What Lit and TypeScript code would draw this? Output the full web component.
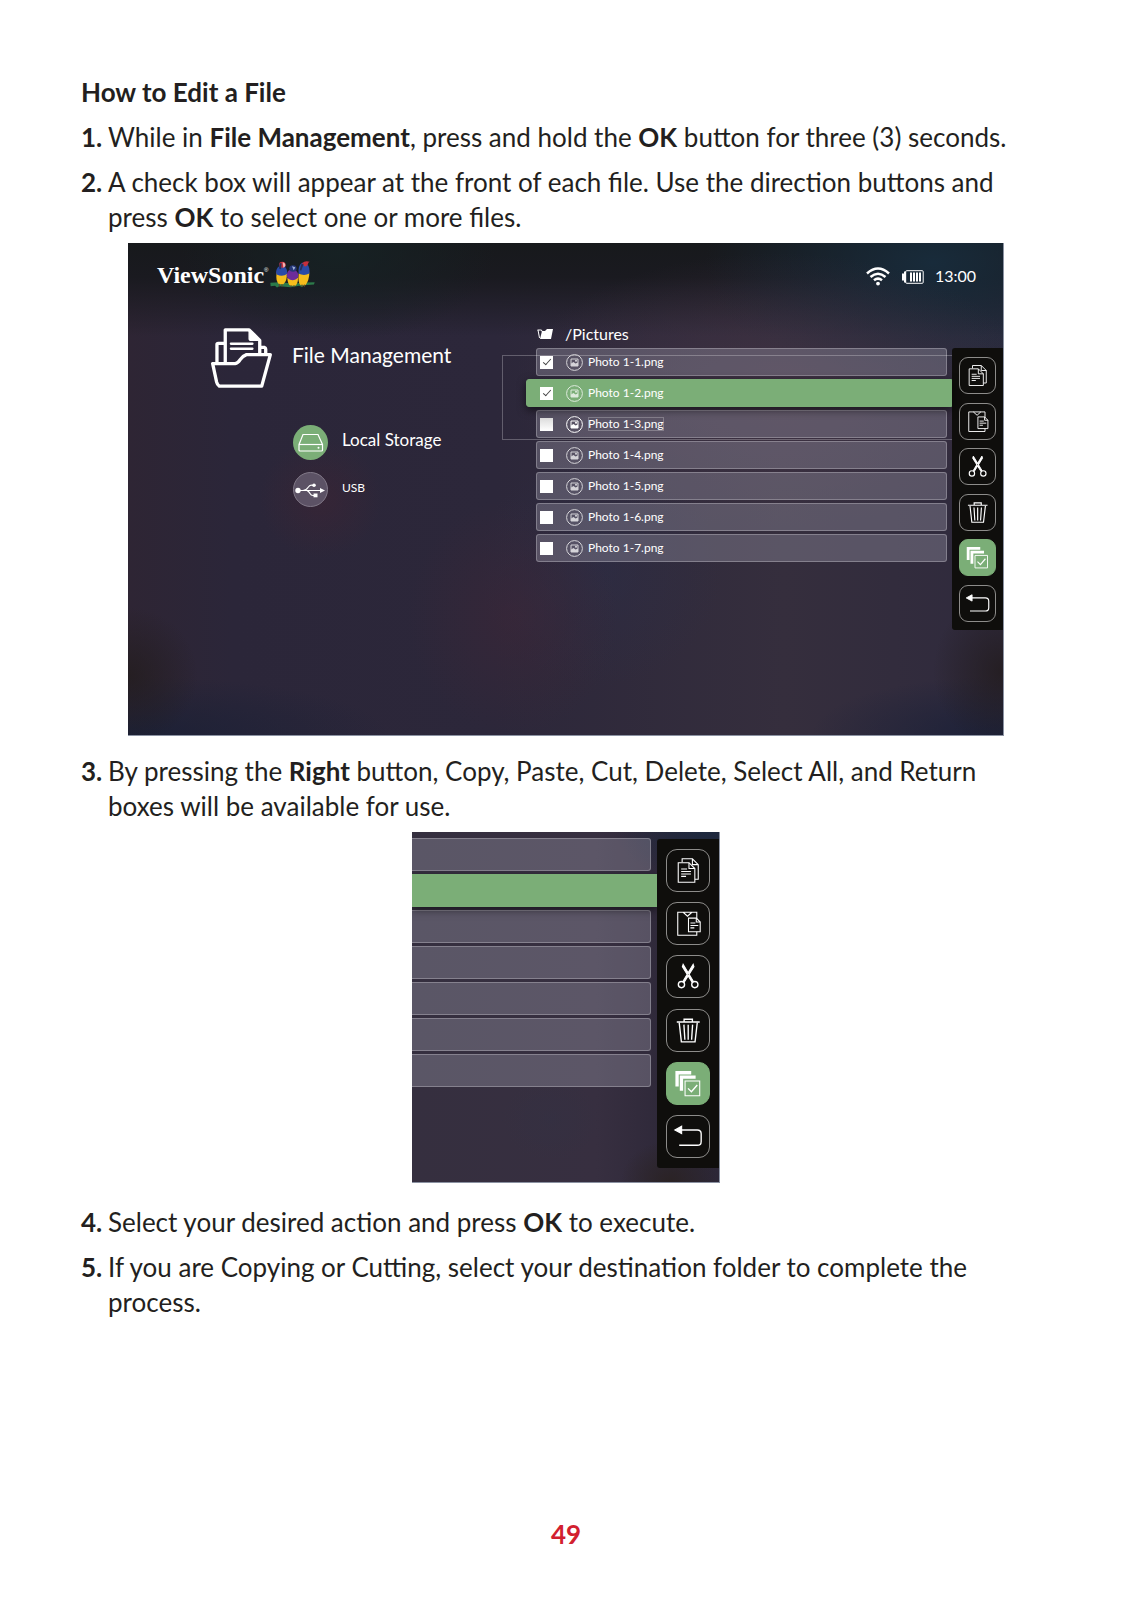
import { LitElement, html, css, svg } from "lit";
import { customElement, property } from "lit/decorators.js";
import { classMap } from "lit/directives/class-map.js";

const actions = [
  {
    name: "Copy",
    active: false,
    art: svg`<path d="M16 13.5V10h10.5l6 6v15h-3.500M26.500 10v6h6"/>
      <path class="solid-dark" d="M12 14h11l6 6v14H12z"/><path d="M23 14v6h6"/>
      <path d="M15 20.500h6M15 23h10M15 25.500h10M15 28h5"/>`,
  },
  {
    name: "Paste",
    active: false,
    art: svg`<path d="M11.500 10.500h19.500v23.500H11.500zM17 10.500l4.500 4 4.500-4"/>
      <path class="solid-dark" d="M22.500 16.500h8l4 4v10h-12z"/><path d="M30.500 16.500v4h4"/>
      <path d="M24.500 21.500h5M24.500 24h8M24.500 26.500h4"/>`,
  },
  {
    name: "Cut",
    active: false,
    art: svg`<path class="solid" d="M17 9.500l-.8 2.500 10 16 1.400-.9zM27.300 9.500l.8 2.500-10 16-1.400-.9z"/>
      <circle class="bold" cx="15.300" cy="30.300" r="3.200"/><circle class="bold" cx="29" cy="30.300" r="3.200"/>`,
  },
  {
    name: "Delete",
    active: false,
    art: svg`<path class="bold" d="M10.500 13.300h23.500M18 13v-2.500h8.500V13"/>
      <path class="bold" d="M13 14l2.200 19.700h14L31.500 14M17.800 16l1 15.500M22.200 16v15.500M26.700 16l-1 15.500"/>`,
  },
  {
    name: "Select All",
    active: true,
    art: svg`<path class="heavy" d="M10.800 25V11h14.500M15.300 29.500V15.500h14.500"/>
      <path class="tint" d="M19 19.500h15v15H19z"/><path class="bold" d="M22 27l3.500 3.500 6-7"/>`,
  },
  {
    name: "Return",
    active: false,
    art: svg`<path class="solid" d="M8.500 15.300l7-3.800v7.600z"/>
      <path class="bold" d="M14 15.300h17.500q4 0 4 4v7.700q0 4-4 4H13"/>`,
  },
];

@customElement("action-bar")
class ActionBar extends LitElement {
  @property({ type: Boolean, reflect: true }) large = false;

  static styles = css`
    :host {
      display: flex;
      flex-direction: column;
      justify-content: space-between;
      box-sizing: border-box;
      width: 51px;
      min-height: 282px;
      padding: 9px 7px 8px;
      border-radius: 3px 0 0 3px;
      background: #0f0e0c;
    }
    :host([large]) {
      width: 62px;
      min-height: 329px;
      padding: 10px 9px;
    }
    .action {
      display: block;
      box-sizing: border-box;
      width: 37px;
      height: 37px;
      padding: 0;
      border: 1px solid #8d8c8a;
      border-radius: 9px;
      background: transparent;
    }
    :host([large]) .action {
      width: 44px;
      height: 43px;
      border-radius: 11px;
    }
    .action.active {
      border-color: #7bae77;
      background: #7bae77;
    }
    .glyph {
      display: block;
      width: 100%;
      height: 100%;
      fill: none;
      stroke: #fff;
      stroke-width: 1.1;
    }
    .bold {
      stroke-width: 1.4;
    }
    .heavy {
      stroke-width: 3.4;
    }
    .solid {
      fill: #fff;
    }
    .solid-dark {
      fill: #0f0e0c;
    }
    .tint {
      fill: #7bae77;
    }
  `;

  render() {
    return actions.map(
      (a) => html`<button
        class=${classMap({ action: true, active: a.active })}
        type="button"
        aria-label=${a.name}
      >
        <svg class="glyph" viewBox="1 1 42 42" aria-hidden="true">${a.art}</svg>
      </button>`
    );
  }
}

const files = [1, 2, 3, 4, 5, 6, 7].map((n) => ({
  id: `photo-${n}`,
  name: `Photo 1-${n}.png`,
  checked: n < 3,
  focused: n === 2,
  outlined: n === 3,
}));

const backdrop = css`
  background:
    radial-gradient(ellipse 7% 12% at 22% 52%, rgba(64, 36, 50, 0.5), transparent),
    radial-gradient(ellipse 12% 24% at 44% 76%, rgba(66, 38, 54, 0.45), transparent),
    radial-gradient(ellipse 14% 24% at 54% 66%, rgba(44, 46, 72, 0.5), transparent),
    radial-gradient(ellipse 8% 14% at 0% 88%, rgba(34, 28, 28, 0.75), transparent),
    radial-gradient(ellipse 8% 16% at 100% 87%, rgba(34, 27, 28, 0.8), transparent),
    radial-gradient(ellipse 30% 12% at 0% 100%, rgba(26, 32, 54, 0.9), transparent),
    radial-gradient(ellipse 22% 12% at 100% 100%, rgba(26, 32, 56, 0.9), transparent),
    radial-gradient(ellipse 30% 28% at 74% 30%, rgba(66, 50, 68, 0.7), transparent),
    radial-gradient(ellipse 26% 26% at 92% 4%, rgba(24, 44, 60, 0.95), transparent),
    radial-gradient(ellipse 18% 18% at 24% 2%, rgba(22, 34, 36, 0.9), transparent),
    linear-gradient(180deg, #17191c 0%, #1a1a20 7%, transparent 19%),
    linear-gradient(90deg, #2e2534 0%, #2b2639 12%, #2c273a 42%, #352e3d 75%, #2f2a3d 100%);
`;

@customElement("file-screen")
class FileScreen extends LitElement {
  static styles = css`
    :host {
      display: block;
      color: #fff;
      font-family: Lato, "Liberation Sans", sans-serif;
    }
    .screen {
      ${backdrop}
      box-sizing: border-box;
      border-right: 1px solid #8b92a2;
      border-bottom: 1px solid #8b92a2;
      padding-bottom: 105px;
    }
    .top {
      display: flex;
      align-items: center;
      justify-content: space-between;
      padding: 16px 27px 0 29px;
      height: 34px;
    }
    .brand {
      display: flex;
      align-items: center;
      padding-bottom: 3px;
      font: bold 24px/28px "Liberation Serif", serif;
    }
    .reg {
      align-self: flex-start;
      font: 6px/18px "Liberation Sans", sans-serif;
    }
    .birds {
      width: 45px;
      height: 27px;
      margin-left: 1px;
    }
    .status {
      display: flex;
      align-items: center;
      font-size: 16px;
      line-height: 20px;
    }
    .wifi {
      width: 24px;
      height: 20px;
    }
    .battery {
      width: 22px;
      height: 14px;
      margin: 2px 11px 0 12px;
    }
    .body {
      display: flex;
      align-items: flex-start;
      padding-top: 34px;
    }
    .side {
      flex: 0 0 374px;
      box-sizing: border-box;
      padding-left: 82px;
    }
    .title {
      display: flex;
      align-items: center;
      gap: 19px;
      margin: 0;
      font-size: 21px;
      font-weight: 400;
      line-height: 26px;
    }
    .folder {
      width: 63px;
      height: 62px;
    }
    .title-text {
      padding-bottom: 6px;
    }
    .places {
      display: flex;
      flex-direction: column;
      align-items: flex-start;
      gap: 12px;
      padding: 36px 0 0 83px;
    }
    .place {
      display: flex;
      align-items: center;
      gap: 14px;
      padding: 0;
      border: 0;
      background: none;
      color: inherit;
      font: 17px/20px Lato, sans-serif;
    }
    .place-label {
      padding-bottom: 6px;
    }
    .place.small {
      font-size: 12px;
    }
    .place.small .place-label {
      padding-bottom: 3px;
    }
    .disc {
      width: 35px;
      height: 35px;
    }
    .browser {
      position: relative;
      flex: 1;
      min-width: 0;
    }
    .path {
      display: flex;
      align-items: center;
      gap: 12px;
      padding: 0 0 7px 35px;
      font-size: 16px;
      line-height: 14px;
    }
    .path-icon {
      width: 16px;
      height: 12px;
    }
    .main {
      display: flex;
      align-items: flex-start;
    }
    .files {
      display: flex;
      flex: 1;
      flex-direction: column;
      gap: 3px;
      min-width: 0;
      margin: 0;
      padding: 0 0 0 24px;
      list-style: none;
    }
    .file {
      display: flex;
      align-items: center;
      box-sizing: border-box;
      height: 28px;
      margin: 0 5px 0 10px;
      padding-left: 3px;
      border: 1px solid rgba(255, 255, 255, 0.26);
      border-radius: 3px;
      background: rgba(158, 154, 172, 0.36);
      font-size: 12px;
    }
    .file.focused {
      position: relative;
      margin: 0;
      padding-left: 13px;
      border-color: #7bae77;
      border-radius: 3px 0 0 3px;
      background: #7bae77;
      box-shadow: 0 3px 9px rgba(0, 0, 0, 0.55);
    }
    .check {
      appearance: none;
      box-sizing: border-box;
      width: 13px;
      height: 13px;
      margin: 0;
      background: #fff;
    }
    .check:checked::before {
      content: "";
      display: block;
      box-sizing: border-box;
      width: 4px;
      height: 8px;
      margin: 1px 0 0 5px;
      border: solid #444;
      border-width: 0 1px 1px 0;
      transform: rotate(42deg);
    }
    .outlined .check {
      background: linear-gradient(#dcdcdc, #fff);
    }
    .name {
      display: flex;
      align-items: center;
      gap: 5px;
      margin-left: 13px;
      line-height: 14px;
    }
    .thumb {
      width: 17px;
      height: 17px;
      opacity: 0.75;
    }
    .outlined .thumb {
      opacity: 1;
    }
    .outlined .caption {
      outline: 1px solid rgba(255, 255, 255, 0.25);
      outline-offset: -1px;
    }
    .selection {
      position: absolute;
      top: 28px;
      right: 51px;
      left: 0;
      height: 85px;
      box-sizing: border-box;
      border: 1px solid rgba(255, 255, 255, 0.26);
      border-right: 0;
      pointer-events: none;
    }
  `;

  render() {
    return html`<div class="screen">
      <header class="top">
        <div class="brand">
          <span>ViewSonic</span><span class="reg">®</span>
          <svg class="birds" viewBox="0 0 135 80" aria-hidden="true">
            <path d="M1 65l28-2 40 4 36-3 29-1-2 7-30 2-6 6-8-4-26 4-34-3-7 4-6-5-13 1z" fill="#2c7a4a" />
            <path d="M20 32q-4 32 8 37h12q12-10 11-36z" fill="#f6bd1c" />
            <path d="M18 34q2-18 14-20h8q13 8 12 24-14 10-32 2z" fill="#2a4aa6" />
            <ellipse cx="37" cy="11" rx="10" ry="9" fill="#c52f3c" />
            <path d="M38 3q9 2 8 12l-6 5z" fill="#f0b4b4" />
            <path d="M29 6l-2 16 6 2 2-18z" fill="#26305a" />
            <path d="M86 36q-3 30 6 36h14q12-14 12-38z" fill="#f6bd1c" />
            <path d="M86 38q-3-24 10-33l14 2q11 12 8 30-14 8-32 1z" fill="#2a4aa6" />
            <path d="M96 6q10-9 23-4l-4 3q-2 11-11 11z" fill="#c52f3c" />
            <path d="M94 9l-5 18 5 1 7-20z" fill="#26305a" />
            <path d="M52 50q1 20 9 24h15q8-6 8-24z" fill="#f6bd1c" />
            <path d="M50 42q2-16 14-18h8q13 6 13 20-1 12-17 13-17-2-18-15z" fill="#6c2c9a" />
            <ellipse cx="69" cy="22" rx="11" ry="10" fill="#263778" />
            <path d="M66 15l10 3-5 9z" fill="#9eb2d8" />
            <path d="M28 68v8M36 69v7M63 72v6M72 72v6M96 70v7M103 70v7" stroke="#6a4a28" stroke-width="3" />
          </svg>
        </div>
        <div class="status">
          <svg class="wifi" viewBox="0 0 24 20" fill="none" stroke="#fff" stroke-width="2.500" aria-hidden="true">
            <path d="M1 7.500q11-10 22 0M4.500 11q7.500-6.500 15 0M8 14.300q4-3.400 8 0" />
            <circle cx="12" cy="17.600" r="1.900" fill="#fff" stroke="none" />
          </svg>
          <svg class="battery" viewBox="0 0 22 14" aria-hidden="true">
            <path d="M0 3.500h2V1.500h2v11H2v-2H0z" fill="#fff" />
            <rect x="3.700" y=".7" width="17.500" height="12.600" rx="1" fill="none" stroke="#fff" />
            <path d="M9 2.500v9M12 2.500v9M15 2.500v9M18 2.500v9" stroke="#fff" stroke-width="2" />
          </svg>
          <time>13:00</time>
        </div>
      </header>
      <div class="body">
        <section class="side">
          <h2 class="title">
            <svg class="folder" viewBox="0 0 190 186" fill="none" stroke="#fff" stroke-width="10" stroke-linejoin="round" stroke-linecap="round" aria-hidden="true">
              <path d="M8 110H76Q84 109 91 98T110 83H182L156 178H28Q22 174 20 166Z" />
              <path d="M46 106V8H118L150 40V80M21 106V52Q21 49 25 49H44M154 61H164Q168 62 168 66V80" />
              <path d="M118 8V34Q118 40 124 40H150Z" fill="#fff" stroke-width="4" />
              <path d="M63 50H128M63 65H128" stroke-width="7" />
            </svg>
            <span class="title-text">File Management</span>
          </h2>
          <div class="places">
            <button class="place" type="button">
              <svg class="disc" viewBox="0 0 35 35" fill="none" stroke="#fff" stroke-width="1.200" aria-hidden="true">
                <circle cx="17.500" cy="17.500" r="17.500" fill="#7bae77" stroke="none" />
                <path d="M6 19.500L10 9.500h15l4.500 10v5.500q0 1-1 1H7q-1 0-1-1z" />
                <path d="M6 19.500h23.500" />
                <circle cx="25.500" cy="22.800" r="1" fill="#fff" stroke="none" />
              </svg>
              <span class="place-label">Local Storage</span>
            </button>
            <button class="place small" type="button">
              <svg class="disc" viewBox="0 0 35 35" fill="none" stroke="#fff" stroke-width="1.200" aria-hidden="true">
                <circle cx="17.500" cy="17.500" r="17" fill="#5c5265" stroke="#817988" stroke-width="1" />
                <path d="M5 18.500h23M10 18.500q3 0 5-3t4-2.200h3M14 18.500q2 1 3 3t3 2h2" />
                <g fill="#fff" stroke="none">
                  <circle cx="5" cy="18.500" r="2.700" />
                  <path d="M27 16l5 2.500-5 2.500z" />
                  <circle cx="21" cy="13.300" r="1.800" />
                  <path d="M20.500 21.500h4v3.800h-4z" />
                </g>
              </svg>
              <span class="place-label">USB</span>
            </button>
          </div>
        </section>
        <section class="browser">
          <div class="path">
            <svg class="path-icon" viewBox="0 0 16 12" fill="#fff" aria-hidden="true">
              <path d="M5 3h3l2-2h6l-2 10H3z" />
              <path d="M.5 2h4l.5 1.500M1 2l1.500 8" fill="none" stroke="#fff" />
            </svg>
            <span>/Pictures</span>
          </div>
          <div class="main">
            <ul class="files">
              ${files.map(
                (f) => html`<li
                  class=${classMap({ file: true, focused: f.focused, outlined: f.outlined })}
                >
                  <input class="check" type="checkbox" id=${f.id} .checked=${f.checked} />
                  <label class="name" for=${f.id}>
                    <svg class="thumb" viewBox="0 0 17 17" fill="none" stroke="#fff" aria-hidden="true">
                      <circle cx="8.500" cy="8.500" r="7.900" />
                      <path d="M5 5h7v7H5z" />
                      <path d="M5 12V9.500l2.500-1.500 2 1.500L12 8.500V12z" fill="#fff" stroke="none" />
                      <circle cx="10" cy="6.800" r="1" fill="#fff" stroke="none" />
                    </svg>
                    <span class="caption">${f.name}</span>
                  </label>
                </li>`
              )}
            </ul>
            <action-bar></action-bar>
          </div>
          <div class="selection"></div>
        </section>
      </div>
    </div>`;
  }
}

@customElement("action-closeup")
class ActionCloseup extends LitElement {
  static styles = css`
    :host {
      display: block;
    }
    .crop {
      display: flex;
      align-items: flex-start;
      box-sizing: border-box;
      padding: 6px 0 14px;
      border-right: 1px solid #8b92a2;
      border-bottom: 1px solid #8b92a2;
      background:
        radial-gradient(ellipse 16% 12% at 84% 100%, rgba(42, 34, 34, 0.9), transparent),
        radial-gradient(ellipse 30% 14% at 96% 0%, rgba(28, 40, 62, 0.95), transparent),
        radial-gradient(ellipse 16% 12% at 45% 82%, rgba(52, 48, 66, 0.7), transparent),
        linear-gradient(90deg, #352f3f 0%, #372f40 60%, #2e2839 84%, #2c2737 100%);
    }
    .rows {
      position: relative;
      display: flex;
      flex: 1;
      flex-direction: column;
      gap: 3px;
    }
    .row {
      box-sizing: border-box;
      height: 33px;
      margin-right: 6px;
      border: 1px solid rgba(255, 255, 255, 0.26);
      border-left: 0;
      border-radius: 0 3px 3px 0;
      background: rgba(158, 154, 172, 0.36);
    }
    .row.focused {
      position: relative;
      margin-right: 0;
      border: 0;
      border-radius: 0;
      background: #7bae77;
      box-shadow: 0 3px 8px rgba(0, 0, 0, 0.5);
      clip-path: inset(-4px 0 -14px 0);
    }
    .bar {
      margin-top: 1px;
    }
  `;

  render() {
    return html`<div class="crop">
      <div class="rows">
        ${files.map((f) => html`<div class=${classMap({ row: true, focused: f.focused })}></div>`)}
      </div>
      <action-bar class="bar" large></action-bar>
    </div>`;
  }
}

@customElement("app-root")
class AppRoot extends LitElement {
  static styles = css`
    :host {
      display: block;
      background: #fff;
      color: #231f20;
      font-family: Lato, "Liberation Sans", sans-serif;
      font-size: 26px;
      line-height: 35px;
    }
    .page {
      display: flex;
      flex-direction: column;
      box-sizing: border-box;
      min-height: 100vh;
      padding: 75px 81px 48px;
    }
    .heading {
      margin: 0 0 10px;
      font-size: 26px;
      font-weight: 700;
      line-height: 35px;
    }
    .steps {
      display: flex;
      flex-direction: column;
      gap: 10px;
      margin: 0;
      padding: 0;
      list-style: none;
    }
    .step {
      display: grid;
      grid-template-columns: 27px 1fr;
    }
    .text {
      margin: 0;
      padding-right: 18px;
    }
    .figure {
      grid-column: 1 / -1;
      justify-self: center;
      box-sizing: border-box;
      width: 100%;
      max-width: 876px;
      margin: 8px 0;
    }
    .figure.narrow {
      max-width: 308px;
      margin: 8px 0 12px;
    }
    .folio {
      margin-top: auto;
      color: #d2202f;
      font-weight: 700;
      text-align: center;
    }
  `;

  render() {
    return html`<main class="page">
      <h1 class="heading">How to Edit a File</h1>
      <ol class="steps">
        <li class="step">
          <b>1.</b>
          <p class="text">
            While in <b>File Management</b>, press and hold the <b>OK</b> button for three (3)
            seconds.
          </p>
        </li>
        <li class="step">
          <b>2.</b>
          <p class="text">
            A check box will appear at the front of each file. Use the direction buttons and press
            <b>OK</b> to select one or more files.
          </p>
          <file-screen class="figure"></file-screen>
        </li>
        <li class="step">
          <b>3.</b>
          <p class="text">
            By pressing the <b>Right</b> button, Copy, Paste, Cut, Delete, Select All, and Return
            boxes will be available for use.
          </p>
          <action-closeup class="figure narrow"></action-closeup>
        </li>
        <li class="step">
          <b>4.</b>
          <p class="text">Select your desired action and press <b>OK</b> to execute.</p>
        </li>
        <li class="step">
          <b>5.</b>
          <p class="text">
            If you are Copying or Cutting, select your destination folder to complete the process.
          </p>
        </li>
      </ol>
      <footer class="folio">49</footer>
    </main>`;
  }
}
